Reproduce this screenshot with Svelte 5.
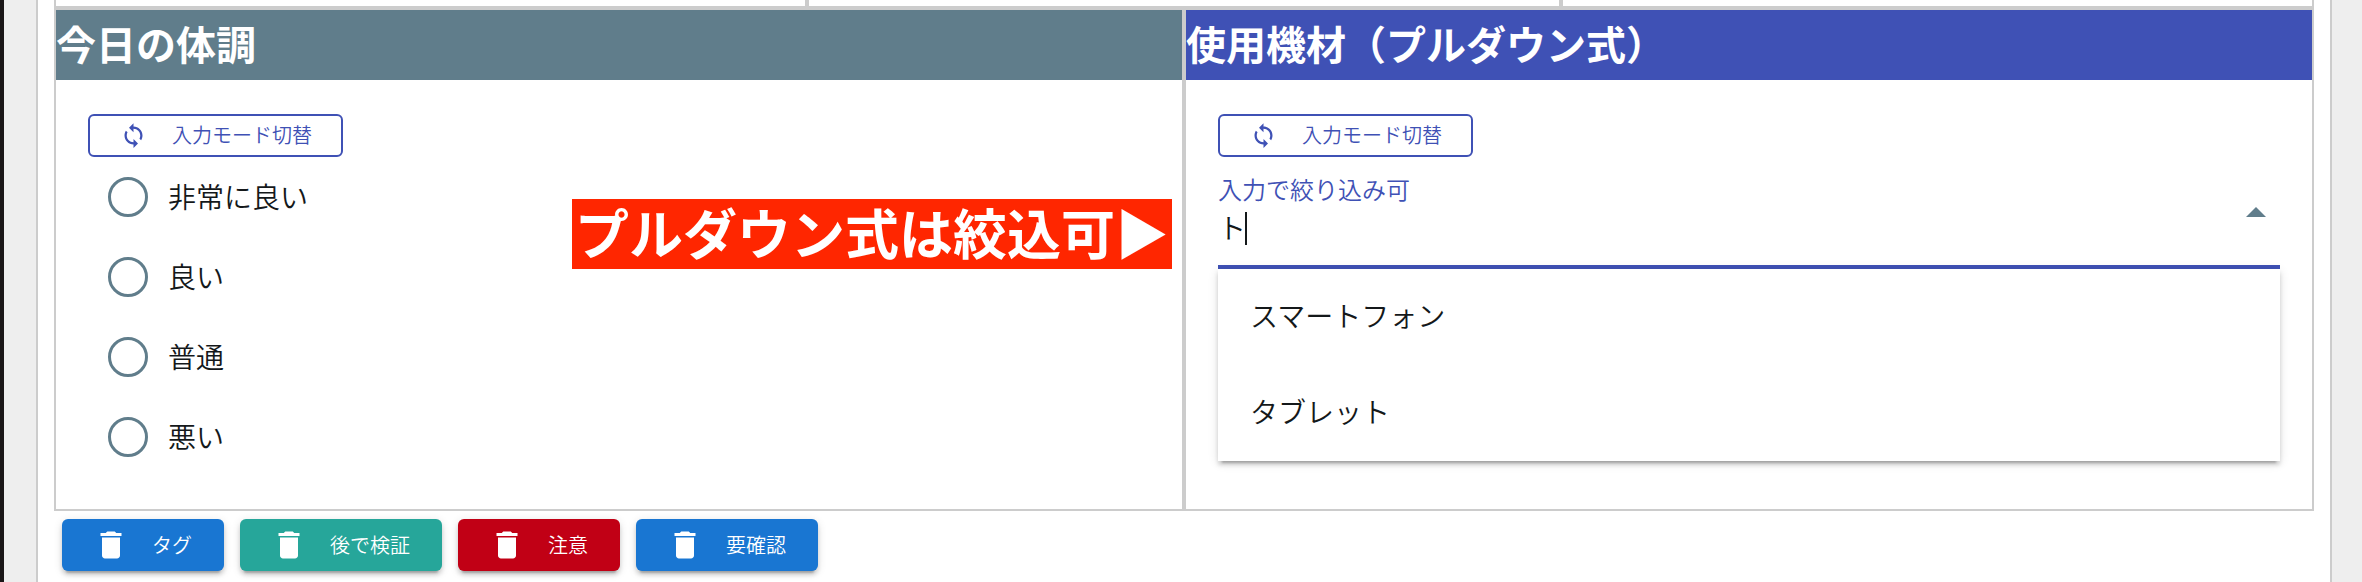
<script>
  const conditions = ['非常に良い', '良い', '普通', '悪い'];
  const devices = ['スマートフォン', 'タブレット'];
  const tags = [
    { label: 'タグ', tone: 'blue' },
    { label: '後で検証', tone: 'teal' },
    { label: '注意', tone: 'red' },
    { label: '要確認', tone: 'blue' }
  ];
  let condition = $state('');
  let keyword = $state('ト');
</script>

{#snippet modeButton()}
  <button class="mode" type="button">
    <svg viewBox="0 0 24 24" aria-hidden="true">
      <path d="M12 4V1L8 5l4 4V6c3.31 0 6 2.69 6 6 0 1.01-.25 1.97-.7 2.8l1.46 1.46C19.54 15.03 20 13.57 20 12c0-4.42-3.58-8-8-8zm0 14c-3.31 0-6-2.69-6-6 0-1.01.25-1.97.7-2.8L5.24 7.74C4.46 8.97 4 10.43 4 12c0 4.42 3.58 8 8 8v3l4-4-4-4v3z" />
    </svg>
    <span>入力モード切替</span>
  </button>
{/snippet}

<div class="shell">
  <main class="sheet">
    <div class="row previous">
      <div class="cell"></div>
      <div class="cell"></div>
      <div class="cell"></div>
    </div>

    <div class="row">
      <section class="cell">
        <h2 class="slate">今日の体調</h2>
        <div class="body">
          {@render modeButton()}
          <div class="options">
            {#each conditions as name}
              <label>
                <input type="radio" name="condition" value={name} bind:group={condition} />
                <span>{name}</span>
              </label>
            {/each}
          </div>
        </div>
        <strong class="callout">プルダウン式は絞込可▶</strong>
      </section>

      <section class="cell">
        <h2 class="indigo">使用機材（プルダウン式）</h2>
        <div class="body">
          {@render modeButton()}
          <div class="combo">
            <div class="field">
              <label for="device">入力で絞り込み可</label>
              <div class="entry">
                <input id="device" type="text" autocomplete="off" bind:value={keyword} />
                <i class="caret"></i>
              </div>
            </div>
            <svg class="arrow" viewBox="0 0 20 10" aria-hidden="true"><path d="M0 10 10 0l10 10z" /></svg>
            <ul class="menu">
              {#each devices as device}
                <li>{device}</li>
              {/each}
            </ul>
          </div>
        </div>
      </section>
    </div>

    <div class="tags">
      {#each tags as tag}
        <button type="button" class="tag {tag.tone}">
          <svg viewBox="0 0 24 24" aria-hidden="true">
            <path d="M6 19c0 1.100.9 2 2 2h8c1.100 0 2-.9 2-2V7H6v12zM19 4h-3.500l-1-1h-5l-1 1H5v2h14V4z" />
          </svg>
          <span>{tag.label}</span>
        </button>
      {/each}
    </div>
  </main>
</div>

<style>
  :global(body) {
    margin: 0;
    background: #eee;
  }
  .shell,
  .shell * {
    box-sizing: border-box;
  }
  .shell {
    min-height: 100vh;
    display: flex;
    padding: 0 30px 0 32px;
    border-left: 4px solid #1a1617;
    background: #eee;
    color: #14181a;
    font-family: 'Noto Sans CJK JP', sans-serif;
    font-size: 28px;
    font-weight: 350;
    line-height: 40px;
  }
  .sheet {
    flex: 1;
    min-width: 0;
    padding: 0 16px;
    border: solid #ccc;
    border-width: 0 2px;
    background: #fff;
  }
  .row {
    display: flex;
  }
  .cell {
    position: relative;
    flex: 1;
    min-width: 0;
    border: 2px solid #ccc;
  }
  .previous .cell {
    height: 8px;
    border-top: 0;
  }
  h2 {
    margin: 0;
    padding-bottom: 4px;
    color: #fff;
    font-size: 40px;
    font-weight: 700;
    line-height: 66px;
    white-space: nowrap;
  }
  .slate {
    background: #607d8b;
  }
  .indigo {
    background: #3f51b5;
  }
  .body {
    padding: 34px 32px 32px;
  }
  button {
    display: flex;
    align-items: center;
    font-family: inherit;
    font-size: 20px;
    font-weight: 350;
    white-space: nowrap;
    cursor: pointer;
  }
  svg {
    display: block;
    flex: none;
    fill: currentColor;
  }
  .mode {
    height: 43px;
    padding: 0 29px 0 30px;
    gap: 25px;
    border: 2px solid #3f51b5;
    border-radius: 6px;
    background: #fff;
    color: #3f51b5;
  }
  .mode svg {
    width: 27px;
    height: 27px;
  }
  button span,
  .options span {
    padding-bottom: 2px;
  }
  .options label {
    display: flex;
    align-items: center;
    gap: 20px;
    width: fit-content;
    height: 80px;
    padding-left: 20px;
  }
  .options input {
    appearance: none;
    width: 40px;
    height: 40px;
    margin: 0;
    border: 3px solid #607d8b;
    border-radius: 50%;
  }
  .options input:checked {
    background: radial-gradient(#607d8b 50%, transparent 54%);
  }
  .callout {
    position: absolute;
    top: 189px;
    right: 10px;
    padding: 0 3px 4px;
    background: #ff2600;
    color: #fff;
    font-size: 54px;
    font-weight: 700;
    line-height: 66px;
    white-space: nowrap;
  }
  .combo {
    position: relative;
    display: flex;
    align-items: flex-start;
    height: 112px;
    padding: 14px 14px 0 0;
    border-bottom: 4px solid #3f51b5;
  }
  .field {
    flex: 1;
  }
  .field label {
    display: block;
    color: #3f51b5;
    font-size: 24px;
    line-height: 36px;
  }
  .entry {
    position: relative;
  }
  .entry input {
    display: block;
    width: 100%;
    height: 40px;
    padding: 0;
    border: 0;
    outline: 0;
    background: transparent;
    color: inherit;
    font: inherit;
    caret-color: transparent;
  }
  .caret {
    position: absolute;
    top: 5px;
    left: 27px;
    width: 2px;
    height: 33px;
    background: #14181a;
  }
  .arrow {
    width: 20px;
    height: 10px;
    margin-top: 36px;
    color: #607d8b;
  }
  .menu {
    position: absolute;
    top: 112px;
    left: 0;
    right: 0;
    margin: 0;
    padding: 0;
    list-style: none;
    background: #fff;
    box-shadow:
      0 6px 2px -4px rgba(0, 0, 0, 0.2),
      0 4px 4px rgba(0, 0, 0, 0.14),
      0 2px 10px rgba(0, 0, 0, 0.12);
  }
  .menu li {
    padding: 0 32px 4px;
    line-height: 92px;
  }
  .tags {
    display: flex;
    flex-wrap: wrap;
    gap: 16px;
    padding: 8px;
  }
  .tag {
    height: 52px;
    padding: 0 32px 0 31px;
    gap: 23px;
    border: 0;
    border-radius: 6px;
    color: #fff;
    box-shadow:
      0 6px 2px -4px rgba(0, 0, 0, 0.2),
      0 4px 4px rgba(0, 0, 0, 0.14),
      0 2px 10px rgba(0, 0, 0, 0.12);
  }
  .tag svg {
    width: 36px;
    height: 36px;
  }
  .blue {
    background: #1976d2;
  }
  .teal {
    background: #26a69a;
  }
  .red {
    background: #c10015;
  }
</style>
